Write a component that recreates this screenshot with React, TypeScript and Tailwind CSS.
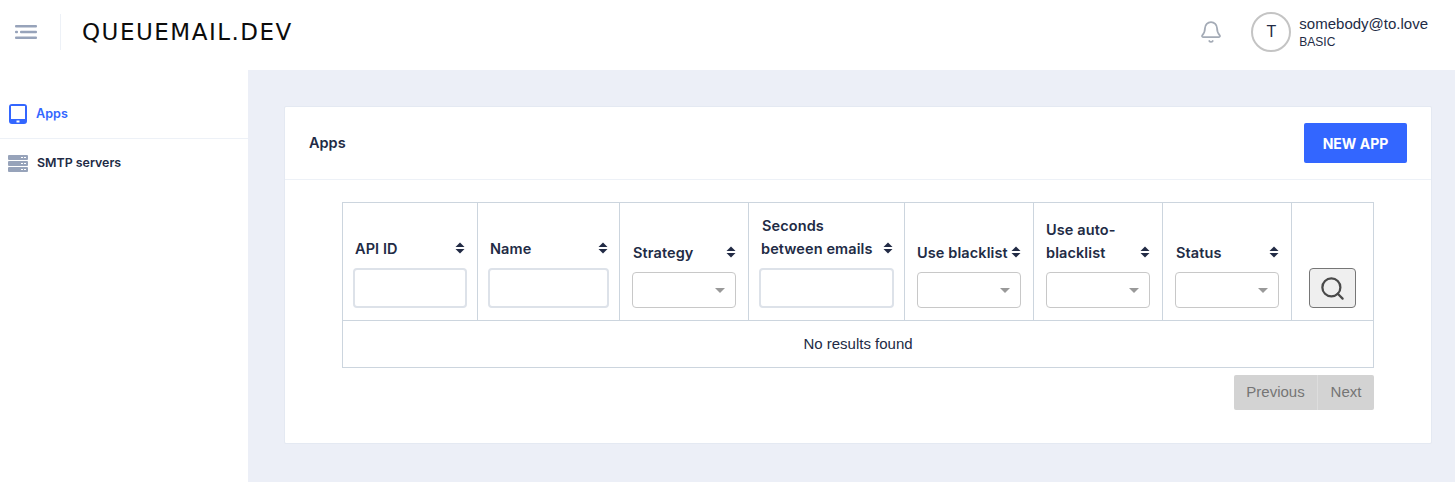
import React from "react";
import { Bell, Search } from "lucide-react";

const SortIcon = () => (
  <svg width="10" height="12" viewBox="0 0 10 12" className="mb-[6px] shrink-0 fill-[#222b45]">
    <path d="M5 0.5 9.5 5H0.5Z" />
    <path d="M5 11.5 0.5 7H9.5Z" />
  </svg>
);

const TextFilter = ({ width }: { width: string }) => (
  <input type="text" className={`block h-[40px] rounded-[4px] border-2 border-[#dde2e9] bg-white ${width}`} />
);

const SelectFilter = () => (
  <div className="flex h-[36px] w-[104px] items-center justify-end rounded-[4px] border border-[#c8c8c8] bg-white pr-[10px]">
    <div className="h-0 w-0 border-x-[5px] border-t-[5px] border-x-transparent border-t-[#999999]" />
  </div>
);

const Head = ({ className, children }: { className: string; children: React.ReactNode }) => (
  <div className={`flex items-end justify-between text-[14.5px] leading-[23px] font-semibold tracking-[0.1px] text-[#222b45] ${className}`}>
    {children}
  </div>
);

export default function App() {
  return (
    <div className="flex h-[482px] flex-col overflow-hidden bg-white font-['Inter',sans-serif]">
      {/* Top bar */}
      <header className="flex h-[70px] shrink-0 items-center pr-[27px] pb-[6px]">
        <div className="flex w-[60px] items-center pl-[15px]">
          <svg width="22" height="14" viewBox="0 0 22 14" className="fill-[#97a3ba]">
            <rect x="0" y="0" width="22" height="2.5" rx="1" />
            <rect x="0" y="5.75" width="3" height="2.5" rx="1" />
            <rect x="5" y="5.75" width="17" height="2.5" rx="1" />
            <rect x="0" y="11.5" width="22" height="2.5" rx="1" />
          </svg>
        </div>
        <div className="h-[36px] w-px bg-[#edf1f7]" />
        <div className="ml-[21px] flex-1 font-['DejaVu_Sans',sans-serif] text-[23px] leading-[24px] tracking-[1.5px] text-[#0c0c0c]">
          QUEUEMAIL.DEV
        </div>
        <Bell className="mr-[28px] h-[24px] w-[24px] text-[#a4abb6]" strokeWidth={1.75} />
        <div className="mr-[8px] flex h-[40px] w-[40px] items-center justify-center rounded-full border-2 border-[#c4c4c4] font-['Liberation_Sans',sans-serif] text-[16px] text-[#222b45]">
          T
        </div>
        <div className="font-['Liberation_Sans',sans-serif] text-[#222b45]">
          <div className="text-[15px] leading-[18px]">somebody@to.love</div>
          <div className="mt-[1px] text-[12px] leading-[16px]">BASIC</div>
        </div>
      </header>

      <div className="flex flex-1">
        {/* Sidebar */}
        <aside className="w-[248px] shrink-0 pt-[20px]">
          <div className="flex h-[49px] items-center gap-[9px] border-b border-[#edf1f7] pl-[9px] text-[12.6px] font-semibold text-[#3366ff]">
            <svg width="18" height="20" viewBox="0 0 18 20">
              <rect x="0" y="0" width="18" height="20" rx="3" fill="#3366ff" />
              <rect x="2" y="2" width="14" height="13" fill="#ffffff" />
              <rect x="7.5" y="16.5" width="3" height="2" fill="#ffffff" />
            </svg>
            Apps
          </div>
          <div className="flex h-[49px] items-center gap-[9px] pl-[8px] text-[12.4px] font-semibold text-[#222b45]">
            <svg width="20" height="17" viewBox="0 0 20 17" className="fill-[#97a3ba]">
              <rect x="0" y="0" width="20" height="5" rx="1" />
              <rect x="0" y="6" width="20" height="5" rx="1" />
              <rect x="0" y="12" width="20" height="5" rx="1" />
              <rect x="13" y="2" width="2" height="1" fill="#ffffff" />
              <rect x="16" y="2" width="2" height="1" fill="#ffffff" />
              <rect x="13" y="8" width="2" height="1" fill="#ffffff" />
              <rect x="16" y="8" width="2" height="1" fill="#ffffff" />
              <rect x="13" y="14" width="2" height="1" fill="#ffffff" />
              <rect x="16" y="14" width="2" height="1" fill="#ffffff" />
            </svg>
            SMTP servers
          </div>
        </aside>

        {/* Main */}
        <main className="flex-1 bg-[#eceff7] pt-[36px] pr-[24px] pl-[36px]">
          <section className="h-[338px] rounded-[2px] border border-[#e4e9f2] bg-white">
            <div className="flex h-[73px] items-center justify-between border-b border-[#edf1f7] pr-[24px] pl-[24px]">
              <h2 className="text-[14.5px] font-semibold text-[#222b45]">Apps</h2>
              <button className="h-[40px] w-[103px] rounded-[2px] bg-[#3366ff] text-[14px] font-bold text-white">
                NEW APP
              </button>
            </div>

            <div className="px-[57px] pt-[22px]">
              <table className="w-[1032px] table-fixed border-collapse border border-[#ccd5de]">
                <colgroup>
                  <col className="w-[135px]" />
                  <col className="w-[142px]" />
                  <col className="w-[129px]" />
                  <col className="w-[156px]" />
                  <col className="w-[129px]" />
                  <col className="w-[129px]" />
                  <col className="w-[129px]" />
                  <col className="w-[82px]" />
                </colgroup>
                <thead>
                  <tr className="h-[118px]">
                    <th className="border border-[#ccd5de] pr-[12px] pb-[12px] pl-[10px] text-left align-bottom">
                      <Head className="mb-[8px] pl-[2px]">API ID<SortIcon /></Head>
                      <TextFilter width="w-[114px]" />
                    </th>
                    <th className="border border-[#ccd5de] pr-[11px] pb-[12px] pl-[10px] text-left align-bottom">
                      <Head className="mb-[8px] pl-[2px]">Name<SortIcon /></Head>
                      <TextFilter width="w-[121px]" />
                    </th>
                    <th className="border border-[#ccd5de] pr-[12px] pb-[12px] pl-[12px] text-left align-bottom">
                      <Head className="mb-[8px] pl-[1px]">Strategy<SortIcon /></Head>
                      <SelectFilter />
                    </th>
                    <th className="border border-[#ccd5de] pr-[11px] pb-[12px] pl-[10px] text-left align-bottom">
                      <Head className="mb-[8px] pl-[2px]">
                        <span><span className="pl-[1px]">Seconds</span><br />between emails</span>
                        <SortIcon />
                      </Head>
                      <TextFilter width="w-[135px]" />
                    </th>
                    <th className="border border-[#ccd5de] pr-[12px] pb-[12px] pl-[12px] text-left align-bottom">
                      <Head className="mb-[8px]">Use blacklist<SortIcon /></Head>
                      <SelectFilter />
                    </th>
                    <th className="border border-[#ccd5de] pr-[12px] pb-[12px] pl-[12px] text-left align-bottom">
                      <Head className="mb-[8px]">
                        <span>Use auto-<br />blacklist</span>
                        <SortIcon />
                      </Head>
                      <SelectFilter />
                    </th>
                    <th className="border border-[#ccd5de] pr-[12px] pb-[12px] pl-[12px] text-left align-bottom">
                      <Head className="mb-[8px] pl-[1px]">Status<SortIcon /></Head>
                      <SelectFilter />
                    </th>
                    <th className="border border-[#ccd5de] pr-[17px] pb-[12px] pl-[17px] align-bottom">
                      <button className="flex h-[40px] w-[47px] items-center justify-center rounded-[4px] border border-[#767676] bg-[#efefef]">
                        <Search className="h-[27px] w-[27px] text-[#4a4a4a]" strokeWidth={2} />
                      </button>
                    </th>
                  </tr>
                </thead>
                <tbody>
                  <tr className="h-[47px]">
                    <td colSpan={8} className="border border-[#ccd5de] text-center font-['Liberation_Sans',sans-serif] text-[15px] text-[#222b45]">
                      No results found
                    </td>
                  </tr>
                </tbody>
              </table>

              <div className="mt-[7px] flex w-[1032px] justify-end">
                <div className="flex h-[35px] items-center rounded-[2px] bg-[#d3d3d3] font-['Liberation_Sans',sans-serif] text-[15px] text-[#757575]">
                  <span className="flex h-full w-[84px] items-center justify-center border-r border-[#dddddd]">Previous</span>
                  <span className="flex h-full w-[56px] items-center justify-center">Next</span>
                </div>
              </div>
            </div>
          </section>
        </main>
      </div>
    </div>
  );
}
